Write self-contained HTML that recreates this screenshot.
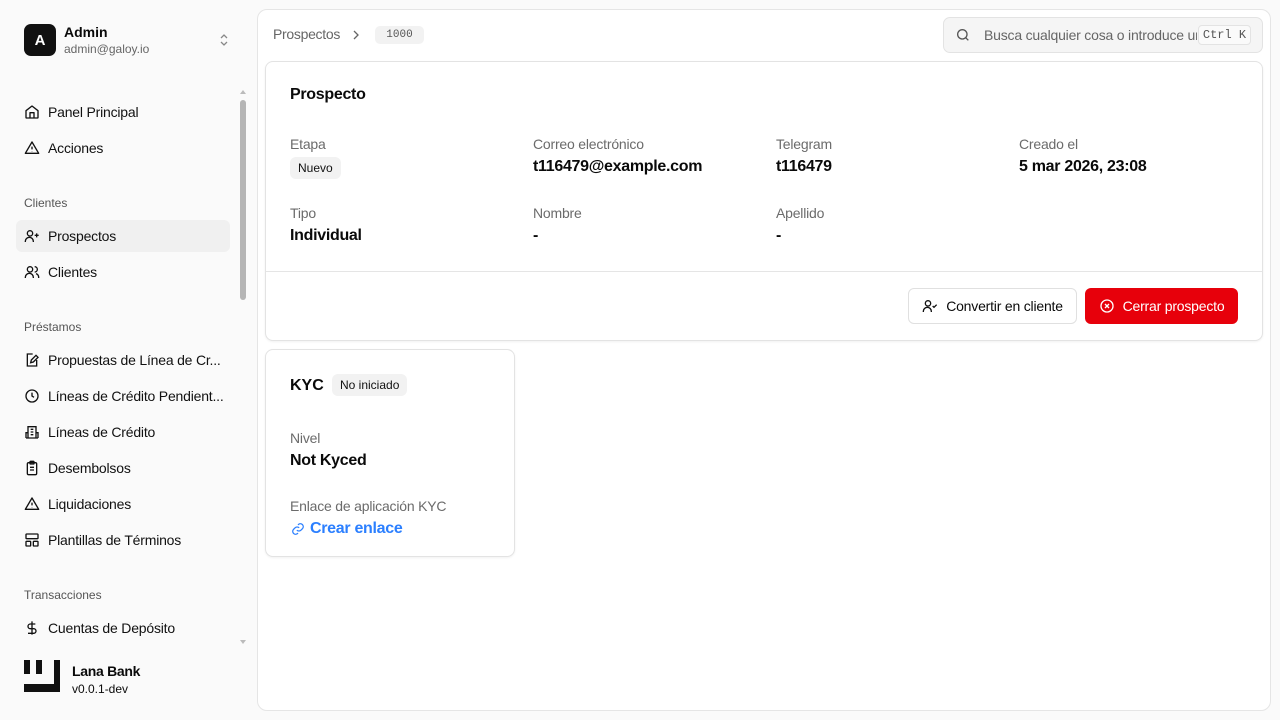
<!DOCTYPE html>
<html><head><meta charset="utf-8"><style>
*{box-sizing:border-box;margin:0;padding:0}
body{width:1280px;height:720px;background:#fafafa;font-family:"Liberation Sans",sans-serif;color:#0a0a0a;position:relative;overflow:hidden;font-size:14px}
.abs{position:absolute}
.nav{position:absolute;left:16px;width:214px;height:32px;display:flex;align-items:center;padding-left:8px;font-size:14px;letter-spacing:-0.2px;color:#111;border-radius:6px}
.nav svg{width:16px;height:16px;margin-right:8px;flex:none}
.grp{position:absolute;left:24px;font-size:12px;color:#555}
.main{position:absolute;left:257px;top:9px;width:1014px;height:702px;background:#fff;border:1px solid #e5e5e5;border-radius:10px}
.card{position:absolute;background:#fff;border:1px solid #e3e3e3;border-radius:8px;box-shadow:0 1px 2px rgba(0,0,0,.06)}
.lbl{position:absolute;font-size:14px;color:#6b6b6b;letter-spacing:-0.2px}
.val{position:absolute;font-size:16px;font-weight:bold;letter-spacing:-0.3px}
.badge{position:absolute;background:#f2f2f2;border-radius:6px;font-size:12px;padding:0 8px;height:22px;line-height:22px;color:#111}
.btn{position:absolute;height:36px;border-radius:6px;display:flex;align-items:center;justify-content:center;font-size:14px;letter-spacing:-0.2px}
</style></head><body>
<div class="abs" style="left:24px;top:24px;width:32px;height:32px;background:#111;border-radius:7px;color:#fff;font-weight:bold;font-size:15px;display:flex;align-items:center;justify-content:center">A</div>
<div class="abs" style="left:64px;top:24px;font-size:14px;font-weight:bold">Admin</div>
<div class="abs" style="left:64px;top:42px;font-size:12px;color:#666">admin@galoy.io</div>
<svg class="abs" style="left:217px;top:32px" width="14" height="16" viewBox="0 0 14 16" fill="none" stroke="#888" stroke-width="1.3"><path d="M4 6l3-3 3 3M4 10l3 3 3-3"/></svg>
<div class="abs" style="left:240px;top:100px;width:6px;height:200px;background:#b5b5b5;border-radius:3px"></div>
<div class="abs" style="left:240px;top:90px;width:0;height:0;border-left:3px solid transparent;border-right:3px solid transparent;border-bottom:4px solid #bbb"></div>
<div class="abs" style="left:240px;top:640px;width:0;height:0;border-left:3px solid transparent;border-right:3px solid transparent;border-top:4px solid #bbb"></div>

<div class="nav" style="top:96px"><svg viewBox="0 0 24 24" fill="none" stroke="#111" stroke-width="2" stroke-linejoin="round"><path d="M3 10l9-7 9 7v10a1 1 0 0 1-1 1H4a1 1 0 0 1-1-1z"/><path d="M9 21v-8h6v8"/></svg>Panel Principal</div>
<div class="nav" style="top:132px"><svg viewBox="0 0 24 24" fill="none" stroke="#111" stroke-width="2" stroke-linejoin="round"><path d="M12 3L2 20h20z"/><path d="M12 10v4M12 17v.5"/></svg>Acciones</div>
<div class="grp" style="top:196px">Clientes</div>
<div class="nav" style="top:220px;background:#f0f0f0"><svg viewBox="0 0 24 24" fill="none" stroke="#111" stroke-width="2"><circle cx="9" cy="8" r="4"/><path d="M2 21v-1a6 6 0 0 1 12 0v1M19 8v6M16 11h6"/></svg>Prospectos</div>
<div class="nav" style="top:256px"><svg viewBox="0 0 24 24" fill="none" stroke="#111" stroke-width="2"><circle cx="9" cy="8" r="4"/><path d="M2 21v-1a6 6 0 0 1 12 0v1M16 4a4 4 0 0 1 0 8M22 21v-1a6 6 0 0 0-4-5.6"/></svg>Clientes</div>
<div class="grp" style="top:320px">Préstamos</div>
<div class="nav" style="top:344px"><svg viewBox="0 0 24 24" fill="none" stroke="#111" stroke-width="2"><path d="M13 3H5v18h14v-9"/><path d="M18 5l-7 7-1 4 4-1 7-7z"/></svg>Propuestas de Línea de Cr...</div>
<div class="nav" style="top:380px"><svg viewBox="0 0 24 24" fill="none" stroke="#111" stroke-width="2"><circle cx="12" cy="12" r="9"/><path d="M12 7v5l3 2"/></svg>Líneas de Crédito Pendient...</div>
<div class="nav" style="top:416px"><svg viewBox="0 0 24 24" fill="none" stroke="#111" stroke-width="2"><path d="M6 21V4h12v17M3 21h18M3 21v-8h3M18 13h3v8M10 8h4M10 12h4M10 16h4"/></svg>Líneas de Crédito</div>
<div class="nav" style="top:452px"><svg viewBox="0 0 24 24" fill="none" stroke="#111" stroke-width="2"><rect x="5" y="4" width="14" height="18" rx="2"/><rect x="9" y="2" width="6" height="4" rx="1"/><path d="M9 11h6M9 15h6"/></svg>Desembolsos</div>
<div class="nav" style="top:488px"><svg viewBox="0 0 24 24" fill="none" stroke="#111" stroke-width="2" stroke-linejoin="round"><path d="M12 3L2 20h20z"/><path d="M12 10v4M12 17v.5"/></svg>Liquidaciones</div>
<div class="nav" style="top:524px"><svg viewBox="0 0 24 24" fill="none" stroke="#111" stroke-width="2"><rect x="3" y="3" width="18" height="7" rx="1"/><rect x="3" y="14" width="7" height="7" rx="1"/><rect x="14" y="14" width="7" height="7" rx="1"/></svg>Plantillas de Términos</div>
<div class="grp" style="top:588px">Transacciones</div>
<div class="nav" style="top:612px"><svg viewBox="0 0 24 24" fill="none" stroke="#111" stroke-width="2"><path d="M12 2v20M17 6H9.5a3.5 3.5 0 0 0 0 7h5a3.5 3.5 0 0 1 0 7H6"/></svg>Cuentas de Depósito</div>
<svg class="abs" style="left:24px;top:660px" width="36" height="32" viewBox="0 0 36 32"><rect x="0" y="0" width="6" height="14" fill="#111"/><rect x="12" y="0" width="6" height="14" fill="#111"/><rect x="30" y="0" width="6" height="32" fill="#111"/><rect x="0" y="24" width="36" height="8" fill="#111"/></svg>
<div class="abs" style="left:72px;top:663px;font-size:14px;font-weight:bold;letter-spacing:-0.3px">Lana Bank</div>
<div class="abs" style="left:72px;top:682px;font-size:12px">v0.0.1-dev</div>

<div class="main"></div>
<div class="abs" style="left:273px;top:26px;font-size:14px;color:#666;letter-spacing:-0.3px">Prospectos</div>
<svg class="abs" style="left:350px;top:29px" width="12" height="12" viewBox="0 0 12 12" fill="none" stroke="#666" stroke-width="1.3"><path d="M4 2l4 4-4 4"/></svg>
<div class="abs" style="left:375px;top:26px;width:49px;height:18px;background:#f2f2f2;border-radius:5px;font-family:'Liberation Mono',monospace;font-size:11px;color:#555;text-align:center;line-height:18px">1000</div>
<div class="abs" style="left:943px;top:17px;width:320px;height:36px;background:#f5f5f5;border:1px solid #e3e3e3;border-radius:7px"></div>
<svg class="abs" style="left:955px;top:27px" width="16" height="16" viewBox="0 0 24 24" fill="none" stroke="#555" stroke-width="2"><circle cx="11" cy="11" r="7"/><path d="M20 20l-4-4"/></svg>
<div class="abs" style="left:984px;top:27px;width:213px;overflow:hidden;white-space:nowrap;font-size:14px;color:#666;letter-spacing:-0.2px">Busca cualquier cosa o introduce un</div>
<div class="abs" style="left:1198px;top:25px;width:53px;height:20px;border:1px solid #e3e3e3;background:#fafafa;border-radius:4px;font-family:'Liberation Mono',monospace;font-size:12px;color:#555;text-align:center;line-height:18px">Ctrl K</div>

<div class="card" style="left:265px;top:61px;width:998px;height:280px"></div>
<div class="abs" style="left:290px;top:86px;font-size:16px;font-weight:bold;letter-spacing:-0.3px">Prospecto</div>
<div class="lbl" style="left:290px;top:136px">Etapa</div>
<div class="badge" style="left:290px;top:157px">Nuevo</div>
<div class="lbl" style="left:533px;top:136px">Correo electrónico</div>
<div class="val" style="left:533px;top:158px">t116479@example.com</div>
<div class="lbl" style="left:776px;top:136px">Telegram</div>
<div class="val" style="left:776px;top:158px">t116479</div>
<div class="lbl" style="left:1019px;top:136px">Creado el</div>
<div class="val" style="left:1019px;top:158px">5 mar 2026, 23:08</div>
<div class="lbl" style="left:290px;top:205px">Tipo</div>
<div class="val" style="left:290px;top:227px">Individual</div>
<div class="lbl" style="left:533px;top:205px">Nombre</div>
<div class="val" style="left:533px;top:227px">-</div>
<div class="lbl" style="left:776px;top:205px">Apellido</div>
<div class="val" style="left:776px;top:227px">-</div>
<div class="abs" style="left:266px;top:271px;width:996px;height:1px;background:#e5e5e5"></div>
<div class="btn" style="left:908px;top:288px;width:169px;border:1px solid #e0e0e0;background:#fff"><svg width="16" height="16" viewBox="0 0 24 24" fill="none" stroke="#111" stroke-width="2" style="margin-right:8px"><circle cx="9" cy="8" r="4"/><path d="M2 21v-1a6 6 0 0 1 12 0v1M16 12l2 2 4-4"/></svg>Convertir en cliente</div>
<div class="btn" style="left:1085px;top:288px;width:153px;background:#e7000b;color:#fff"><svg width="16" height="16" viewBox="0 0 24 24" fill="none" stroke="#fff" stroke-width="2" style="margin-right:8px"><circle cx="12" cy="12" r="9"/><path d="M9 9l6 6M15 9l-6 6"/></svg>Cerrar prospecto</div>

<div class="card" style="left:265px;top:349px;width:250px;height:208px"></div>
<div class="abs" style="left:290px;top:377px;font-size:16px;font-weight:bold">KYC</div>
<div class="badge" style="left:332px;top:374px">No iniciado</div>
<div class="lbl" style="left:290px;top:430px">Nivel</div>
<div class="val" style="left:290px;top:452px">Not Kyced</div>
<div class="lbl" style="left:290px;top:498px">Enlace de aplicación KYC</div>
<svg class="abs" style="left:291px;top:522px" width="14" height="14" viewBox="0 0 24 24" fill="none" stroke="#2b7fff" stroke-width="2.2"><path d="M10 14a5 5 0 0 0 7 0l3-3a5 5 0 0 0-7-7l-1 1M14 10a5 5 0 0 0-7 0l-3 3a5 5 0 0 0 7 7l1-1"/></svg>
<div class="abs" style="left:310px;top:520px;font-size:16px;font-weight:bold;color:#2b7fff;letter-spacing:-0.3px">Crear enlace</div>
</body></html>
